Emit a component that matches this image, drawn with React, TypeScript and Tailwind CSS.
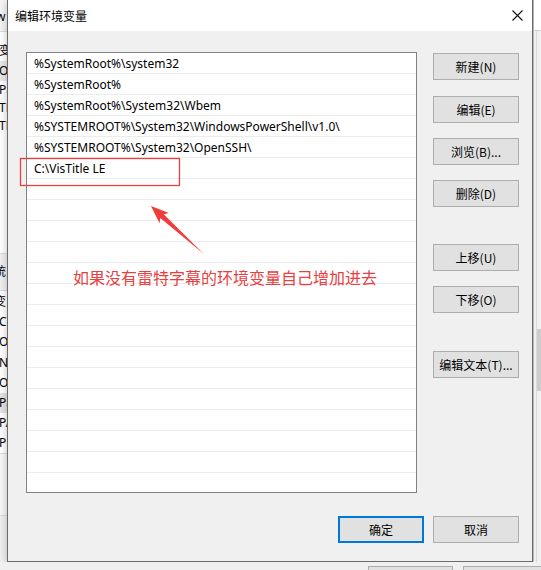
const items = [
  "%SystemRoot%\\system32",
  "%SystemRoot%",
  "%SystemRoot%\\System32\\Wbem",
  "%SYSTEMROOT%\\System32\\WindowsPowerShell\\v1.0\\",
  "%SYSTEMROOT%\\System32\\OpenSSH\\",
  "C:\\VisTitle LE",
];

const ROWS = 20;

function Btn({ label, primary = false, className = "" }: { label: string; primary?: boolean; className?: string }) {
  return (
    <div
      className={
        "w-[86px] h-[27px] flex items-center justify-center text-[12px] text-black bg-[#e1e1e1] " +
        (primary ? "border-2 border-[#0078d7]" : "border border-[#adadad]") +
        " " +
        className
      }
    >
      {label}
    </div>
  );
}

function LeftStrip() {
  return (
    <div className="w-[7px] h-full overflow-hidden bg-white flex flex-col text-[12px] text-black leading-none">
      <div className="h-[31px] bg-[#f4f4f4] flex items-end pb-[8px]">
        <span className="-ml-[4px]">w</span>
      </div>
      <div className="h-[10px] border-t border-[#dcdcdc]"></div>
      <div className="h-[20px] flex items-center">
        <span className="-ml-[1px]">变</span>
      </div>
      <div className="h-[20px] flex items-center bg-[#e8e8e8]">
        <span className="-ml-[1px]">O</span>
      </div>
      <div className="h-[18px] flex items-center">
        <span className="-ml-[1px]">Pa</span>
      </div>
      <div className="h-[18px] flex items-center">
        <span className="-ml-[1px]">TE</span>
      </div>
      <div className="h-[18px] flex items-center">
        <span className="-ml-[1px]">TM</span>
      </div>
      <div className="h-[118px]"></div>
      <div className="h-[37px] border-t border-[#dcdcdc] bg-[#f0f0f0] flex items-center">
        <span className="-ml-[6px]">统</span>
      </div>
      <div className="h-[22px] border-t border-[#dcdcdc] flex items-center">
        <span className="-ml-[6px]">变</span>
      </div>
      <div className="h-[20px] flex items-center">
        <span className="-ml-[1px]">Co</span>
      </div>
      <div className="h-[20px] flex items-center">
        <span className="-ml-[1px]">Or</span>
      </div>
      <div className="h-[21px] flex items-center">
        <span className="-ml-[1px]">N</span>
      </div>
      <div className="h-[20px] flex items-center">
        <span className="-ml-[1px]">O:</span>
      </div>
      <div className="h-[20px] flex items-center bg-[#e4e4e4]">
        <span className="-ml-[1px]">Pa</span>
      </div>
      <div className="h-[20px] flex items-center">
        <span className="-ml-[1px]">PA</span>
      </div>
      <div className="h-[20px] flex items-center">
        <span className="-ml-[1px]">PR</span>
      </div>
      <div className="h-[62px] border-t border-[#dcdcdc] bg-[#f7f7f7]"></div>
      <div className="flex-1 border-t border-[#dcdcdc] bg-[#f0f0f0]"></div>
    </div>
  );
}

function RightStrip() {
  return (
    <div className="w-[8px] h-full flex flex-col bg-[#f0f0f0] border-l border-[#b5b5b5]">
      <div className="h-[31px] bg-white border-b border-[#cfcfcf]"></div>
      <div className="flex-1 flex">
        <div className="w-[3px] border-r border-[#dadada]"></div>
        <div className="flex-1 flex flex-col">
          <div className="h-[298px]"></div>
          <div className="h-[62px] bg-[#cdcdcd]"></div>
          <div className="flex-1"></div>
        </div>
      </div>
    </div>
  );
}

export default function App() {
  return (
    <div
      className="w-[541px] h-[570px] overflow-hidden bg-[#f0f0f0] flex flex-col"
      style={{ fontFamily: '"Segoe UI", "Noto Sans", "Noto Sans CJK SC", sans-serif' }}
    >
      <div className="flex h-[562px]">
        <LeftStrip />

        {/* dialog */}
        <div className="w-[526px] h-full flex flex-col border-l border-r border-b border-[#6b6b6b] bg-[#f0f0f0] shadow-[0_2px_8px_rgba(0,0,0,0.25)]">
          <div className="h-[31px] bg-white flex items-center justify-between pl-[7px] pr-[9px]">
            <span className="text-[12px] text-black" style={{ fontFamily: '"Noto Sans CJK SC", sans-serif' }}>
              编辑环境变量
            </span>
            <svg width="11" height="11" viewBox="0 0 11 11">
              <path d="M0.5 0.5 L10.5 10.5 M10.5 0.5 L0.5 10.5" stroke="#111" strokeWidth="1.1" />
            </svg>
          </div>

          <div className="flex-1 flex flex-col pl-[18px] pr-[13px] pt-[21px]">
            <div className="flex">
              {/* list */}
              <div className="relative w-[391px] h-[441px] bg-white border border-[#828282] overflow-visible">
                <div className="h-full overflow-hidden flex flex-col">
                  {Array.from({ length: ROWS }).map((_, i) => (
                    <div
                      key={i}
                      className="h-[21px] shrink-0 border-b border-[#ececec] pl-[7px] pt-[2px] flex items-center text-[12px] text-black whitespace-nowrap"
                    >
                      {items[i] ?? ""}
                    </div>
                  ))}
                </div>

                <svg
                  className="absolute left-0 top-0 overflow-visible pointer-events-none"
                  width="391"
                  height="441"
                  viewBox="27 53 391 441"
                >
                  <rect x="20.5" y="158.5" width="159" height="27" fill="none" stroke="#e8403f" strokeWidth="1.3" />
                  <polygon
                    points="151,206 168.9,213.1 163.7,214.3 203.8,254 160.3,218 159.5,223.3"
                    fill="#f03d3b"
                  />
                </svg>

                <div
                  className="absolute left-[46px] top-[216px] text-[16px] leading-none text-[#e8403f] whitespace-nowrap"
                  style={{ fontFamily: '"Noto Sans CJK SC", sans-serif' }}
                >
                  如果没有雷特字幕的环境变量自己增加进去
                </div>
              </div>

              {/* buttons */}
              <div className="ml-[16px] flex flex-col pt-[1px]" style={{ fontFamily: '"Noto Sans CJK SC", sans-serif' }}>
                <Btn label="新建(N)" />
                <Btn label="编辑(E)" className="mt-[16px]" />
                <Btn label="浏览(B)..." className="mt-[15px]" />
                <Btn label="删除(D)" className="mt-[15px]" />
                <Btn label="上移(U)" className="mt-[37px]" />
                <Btn label="下移(O)" className="mt-[15px]" />
                <Btn label="编辑文本(T)..." className="mt-[38px]" />
              </div>
            </div>

            <div className="mt-[23px] flex justify-end gap-[9px]" style={{ fontFamily: '"Noto Sans CJK SC", sans-serif' }}>
              <Btn label="确定" primary />
              <Btn label="取消" />
            </div>
          </div>
        </div>

        <RightStrip />
      </div>

      {/* behind-window fragment */}
      <div className="h-[8px] flex pl-[368px] pt-[4px] gap-[10px] bg-[#f0f0f0]">
        <div className="w-[85px] h-[8px] border-l border-t border-r border-[#adadad] bg-[#e1e1e1]"></div>
        <div className="flex-1 h-[8px] border-l border-t border-[#adadad] bg-[#e1e1e1]"></div>
      </div>
    </div>
  );
}
